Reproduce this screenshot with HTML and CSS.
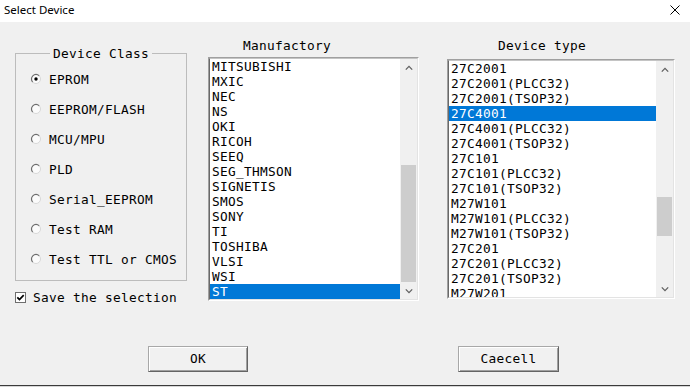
FILE: index.html
```html
<!DOCTYPE html>
<html>
<head>
<meta charset="utf-8">
<title>Select Device</title>
<link rel="stylesheet" href="styles.css">
</head>
<body>
<div class="window">
  <div class="titlebar">
    <span class="title">Select Device</span>
    <svg class="close" width="10" height="10" viewBox="0 0 10 10"><path d="M0.5 0.5 L9.5 9.5 M9.5 0.5 L0.5 9.5" stroke="#000" stroke-width="1" fill="none"/></svg>
  </div>
  <div class="main">
    <div class="left">
      <fieldset class="group">
        <legend>Device Class</legend>
        <div class="radio"><svg class="rb" width="12" height="12" viewBox="0 0 12 12"><circle cx="6" cy="6" r="4.5" fill="#fbfbfb"/><path d="M9.2 2.8 A4.5 4.5 0 0 0 2.8 9.2" stroke="#6e6e6e" stroke-width="1.2" fill="none"/><path d="M2.8 9.2 A4.5 4.5 0 0 0 9.2 2.8" stroke="#d8d8d8" fill="none"/><circle cx="6" cy="6" r="1.7" fill="#000"/></svg><span>EPROM</span></div>
        <div class="radio"><svg class="rb" width="12" height="12" viewBox="0 0 12 12"><circle cx="6" cy="6" r="4.5" fill="#fbfbfb"/><path d="M9.2 2.8 A4.5 4.5 0 0 0 2.8 9.2" stroke="#6e6e6e" stroke-width="1.2" fill="none"/><path d="M2.8 9.2 A4.5 4.5 0 0 0 9.2 2.8" stroke="#d8d8d8" fill="none"/></svg><span>EEPROM/FLASH</span></div>
        <div class="radio"><svg class="rb" width="12" height="12" viewBox="0 0 12 12"><circle cx="6" cy="6" r="4.5" fill="#fbfbfb"/><path d="M9.2 2.8 A4.5 4.5 0 0 0 2.8 9.2" stroke="#6e6e6e" stroke-width="1.2" fill="none"/><path d="M2.8 9.2 A4.5 4.5 0 0 0 9.2 2.8" stroke="#d8d8d8" fill="none"/></svg><span>MCU/MPU</span></div>
        <div class="radio"><svg class="rb" width="12" height="12" viewBox="0 0 12 12"><circle cx="6" cy="6" r="4.5" fill="#fbfbfb"/><path d="M9.2 2.8 A4.5 4.5 0 0 0 2.8 9.2" stroke="#6e6e6e" stroke-width="1.2" fill="none"/><path d="M2.8 9.2 A4.5 4.5 0 0 0 9.2 2.8" stroke="#d8d8d8" fill="none"/></svg><span>PLD</span></div>
        <div class="radio"><svg class="rb" width="12" height="12" viewBox="0 0 12 12"><circle cx="6" cy="6" r="4.5" fill="#fbfbfb"/><path d="M9.2 2.8 A4.5 4.5 0 0 0 2.8 9.2" stroke="#6e6e6e" stroke-width="1.2" fill="none"/><path d="M2.8 9.2 A4.5 4.5 0 0 0 9.2 2.8" stroke="#d8d8d8" fill="none"/></svg><span>Serial_EEPROM</span></div>
        <div class="radio"><svg class="rb" width="12" height="12" viewBox="0 0 12 12"><circle cx="6" cy="6" r="4.5" fill="#fbfbfb"/><path d="M9.2 2.8 A4.5 4.5 0 0 0 2.8 9.2" stroke="#6e6e6e" stroke-width="1.2" fill="none"/><path d="M2.8 9.2 A4.5 4.5 0 0 0 9.2 2.8" stroke="#d8d8d8" fill="none"/></svg><span>Test RAM</span></div>
        <div class="radio"><svg class="rb" width="12" height="12" viewBox="0 0 12 12"><circle cx="6" cy="6" r="4.5" fill="#fbfbfb"/><path d="M9.2 2.8 A4.5 4.5 0 0 0 2.8 9.2" stroke="#6e6e6e" stroke-width="1.2" fill="none"/><path d="M2.8 9.2 A4.5 4.5 0 0 0 9.2 2.8" stroke="#d8d8d8" fill="none"/></svg><span>Test TTL or CMOS</span></div>
      </fieldset>
      <div class="check"><svg class="cb" width="11" height="11" viewBox="0 0 11 11"><rect x="0.5" y="0.5" width="10" height="10" fill="#fff" stroke="#6e6e6e"/><path d="M2.3 5.3 L4.5 7.6 L8.7 3.2" stroke="#000" stroke-width="1.7" fill="none"/></svg><span>Save the selection</span></div>
    </div>

    <div class="col col-mfr">
      <div class="col-label">Manufactory</div>
      <div class="listbox">
        <div class="lb-inner lb-mfr">
          <ul class="items">
            <li>MITSUBISHI</li>
            <li>MXIC</li>
            <li>NEC</li>
            <li>NS</li>
            <li>OKI</li>
            <li>RICOH</li>
            <li>SEEQ</li>
            <li>SEG_THMSON</li>
            <li>SIGNETIS</li>
            <li>SMOS</li>
            <li>SONY</li>
            <li>TI</li>
            <li>TOSHIBA</li>
            <li>VLSI</li>
            <li>WSI</li>
            <li class="sel">ST</li>
          </ul>
          <div class="scrollbar">
            <div class="sb-btn"><svg width="8" height="6" viewBox="0 0 8 6"><path d="M0.8 4.6 L4 1.4 L7.2 4.6" stroke="#606060" stroke-width="1.3" fill="none"/></svg></div>
            <div class="sb-track"><div class="thumb thumb-mfr"></div></div>
            <div class="sb-btn"><svg width="8" height="6" viewBox="0 0 8 6"><path d="M0.8 1.4 L4 4.6 L7.2 1.4" stroke="#606060" stroke-width="1.3" fill="none"/></svg></div>
          </div>
        </div>
      </div>
    </div>

    <div class="col col-dev">
      <div class="col-label">Device type</div>
      <div class="listbox">
        <div class="lb-inner lb-dev">
          <ul class="items">
            <li>27C2001</li>
            <li>27C2001(PLCC32)</li>
            <li>27C2001(TSOP32)</li>
            <li class="sel">27C4001</li>
            <li>27C4001(PLCC32)</li>
            <li>27C4001(TSOP32)</li>
            <li>27C101</li>
            <li>27C101(PLCC32)</li>
            <li>27C101(TSOP32)</li>
            <li>M27W101</li>
            <li>M27W101(PLCC32)</li>
            <li>M27W101(TSOP32)</li>
            <li>27C201</li>
            <li>27C201(PLCC32)</li>
            <li>27C201(TSOP32)</li>
            <li>M27W201</li>
          </ul>
          <div class="scrollbar">
            <div class="sb-btn"><svg width="8" height="6" viewBox="0 0 8 6"><path d="M0.8 4.6 L4 1.4 L7.2 4.6" stroke="#606060" stroke-width="1.3" fill="none"/></svg></div>
            <div class="sb-track"><div class="thumb thumb-dev"></div></div>
            <div class="sb-btn"><svg width="8" height="6" viewBox="0 0 8 6"><path d="M0.8 1.4 L4 4.6 L7.2 1.4" stroke="#606060" stroke-width="1.3" fill="none"/></svg></div>
          </div>
        </div>
      </div>
    </div>
  </div>

  <div class="buttons">
    <div class="btn btn-ok">OK</div>
    <div class="btn btn-cancel">Caecell</div>
  </div>
  <div class="strip"></div>
</div>
</body>
</html>
```

FILE: styles.css
```css
html, body {
  margin: 0;
  padding: 0;
}
body {
  width: 690px;
  height: 387px;
  overflow: hidden;
  background: #f0f0f0;
}
.window {
  width: 690px;
  height: 387px;
  display: flex;
  flex-direction: column;
  font-family: "DejaVu Sans Mono", monospace;
  font-size: 12.8px;
  letter-spacing: 0.3px;
  color: #000;
}
.titlebar {
  height: 22px;
  flex: none;
  background: #fff;
  display: flex;
  justify-content: space-between;
  align-items: flex-start;
  padding: 0 10px 0 4px;
}
.title {
  font-family: "Noto Sans", sans-serif;
  font-size: 11.5px;
  letter-spacing: 0;
  line-height: 20px;
  color: #000;
}
.close {
  margin-top: 5px;
}
.main {
  height: 308px;
  flex: none;
  box-sizing: border-box;
  padding: 16px 0 0 15px;
  display: flex;
  align-items: flex-start;
}
.left {
  width: 172px;
  margin-top: 8px;
}
.group {
  margin: 0;
  padding: 3px 0 6px 14px;
  border: 1px solid #bcbcbc;
  min-width: 0;
}
.group legend {
  margin-left: 20px;
  padding: 0 3px;
  line-height: 15px;
  height: 15px;
}
.radio {
  height: 30px;
  display: flex;
  align-items: center;
  white-space: nowrap;
}
.rb {
  flex: none;
  margin-right: 7px;
}
.check {
  margin-top: 9px;
  height: 15px;
  line-height: 15px;
  display: flex;
  align-items: center;
  white-space: nowrap;
}
.cb {
  flex: none;
  margin-right: 7px;
}
.col-mfr {
  width: 211px;
  margin-left: 21px;
}
.col-dev {
  width: 228px;
  margin-left: 28px;
}
.col-label {
  line-height: 15px;
  height: 15px;
  white-space: nowrap;
}
.col-mfr .col-label {
  padding-left: 35px;
  margin-bottom: 4px;
}
.col-dev .col-label {
  padding-left: 51px;
  margin-bottom: 6px;
}
.listbox {
  border: 1px solid;
  border-color: #a0a0a0 #ffffff #ffffff #a0a0a0;
}
.lb-inner {
  display: flex;
  border: 1px solid;
  border-color: #c4c4c4 #e3e3e3 #e3e3e3 #696969;
  background: #fff;
}
.lb-mfr {
  height: 240px;
}
.lb-dev {
  height: 236px;
}
.items {
  flex: 1;
  margin: 0;
  padding: 0;
  list-style: none;
  overflow: hidden;
  min-width: 0;
}
.items li {
  height: 15px;
  line-height: 15px;
  padding-left: 2px;
  white-space: nowrap;
}
.items li.sel {
  background: #0078d7;
  color: #fff;
}
.scrollbar {
  width: 17px;
  flex: none;
  display: flex;
  flex-direction: column;
  background: #f0f0f0;
}
.sb-btn {
  height: 17px;
  flex: none;
  display: flex;
  align-items: center;
  justify-content: center;
}
.sb-track {
  flex: 1;
}
.thumb {
  margin: 0 1px;
  background: #cdcdcd;
}
.thumb-mfr {
  margin-top: 89px;
  height: 117px;
}
.thumb-dev {
  margin-top: 119px;
  height: 39px;
}
.buttons {
  flex: none;
  display: flex;
  padding: 16px 0 0 148px;
}
.btn {
  box-sizing: border-box;
  height: 26px;
  line-height: 24px;
  text-align: center;
  background: #f1f1f1;
  border: 1px solid;
  border-color: #a8a8a8 #646464 #646464 #a8a8a8;
  box-shadow: inset 1px 1px 0 #ffffff, inset -1px -1px 0 #a0a0a0;
}
.btn-ok {
  width: 100px;
}
.btn-cancel {
  width: 101px;
  margin-left: 210px;
}
.strip {
  margin-top: 13px;
  height: 2px;
  flex: none;
  border-top: 1px solid #3a3a3a;
  background: #d6d6d6;
}
```
